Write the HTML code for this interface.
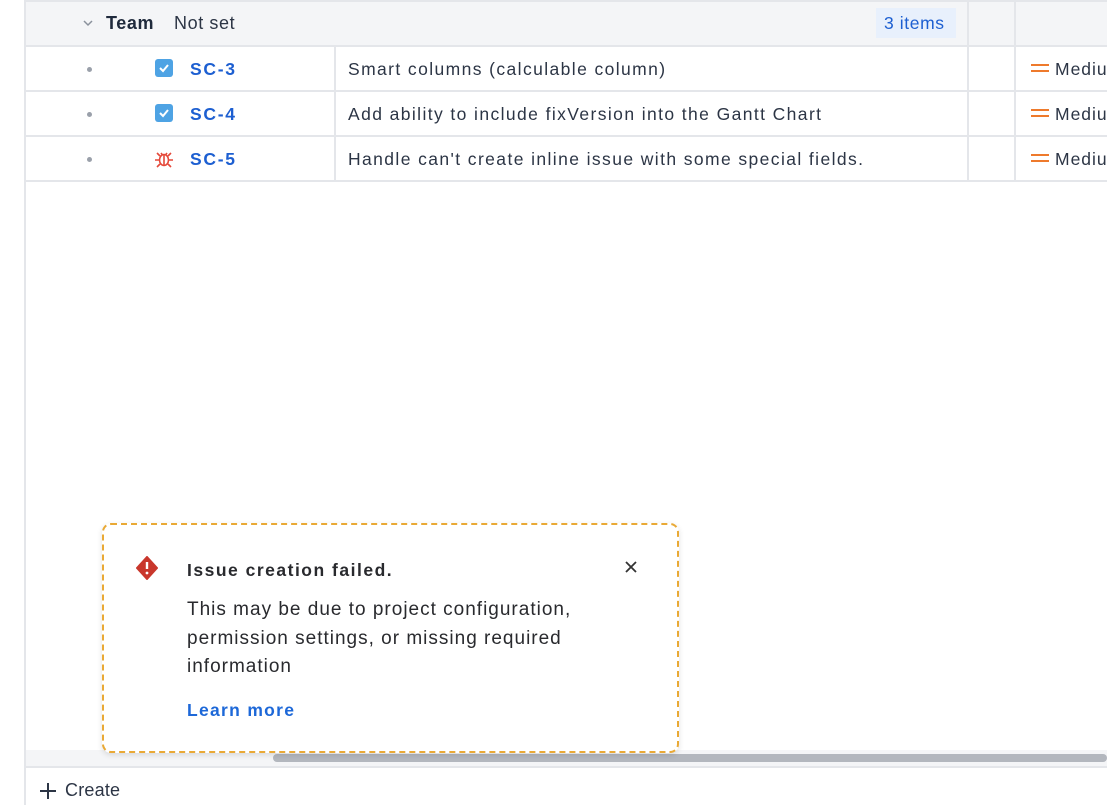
<!DOCTYPE html>
<html><head><style>
body{margin:0;width:1107px;height:805px;overflow:hidden;background:#fff;font-family:"Liberation Sans",sans-serif;color:#172b4d;position:relative}
.abs{position:absolute}
.vl{position:absolute;width:2px;background:#e4e6ea}
.hl{position:absolute;height:2px;background:#e4e6ea;left:25px;right:0}
.t{position:absolute;font-size:17.5px;letter-spacing:1.4px;color:#2c3545;white-space:nowrap}
.key{position:absolute;font-size:17.5px;letter-spacing:1.7px;color:#1d5fd1;font-weight:bold;left:190px}
.dot{position:absolute;left:87px;width:5px;height:5px;border-radius:50%;background:#9aa0aa}
.cb{position:absolute;left:155px;width:18px;height:18px;border-radius:3px;background:#4ea3e4}
.med{position:absolute;left:1031px;font-size:17.5px;letter-spacing:1px;color:#2c3545;white-space:nowrap}
.med:before{content:"";display:inline-block;width:18px;height:8px;border-top:2.5px solid #ee7a2c;border-bottom:2.5px solid #ee7a2c;box-sizing:border-box;margin-right:6px;vertical-align:3px}
</style></head><body>
<div class="abs" style="left:25px;top:0;right:0;height:46px;background:#f4f5f7"></div>
<div class="vl" style="left:24px;top:0;height:805px;width:2px"></div>
<div class="hl" style="top:0"></div>
<div class="hl" style="top:45px"></div>
<div class="hl" style="top:90px"></div>
<div class="hl" style="top:135px"></div>
<div class="hl" style="top:180px"></div>
<div class="vl" style="left:967px;top:0;height:181px"></div>
<div class="vl" style="left:1014px;top:0;height:181px"></div>
<div class="vl" style="left:334px;top:46px;height:135px"></div>
<svg class="abs" style="left:83px;top:19px" width="10" height="8"><path d="M1 2l4 4 4-4" stroke="#8a919c" stroke-width="1.5" fill="none"/></svg>
<div class="abs" style="left:106px;top:13px;font-size:18px;letter-spacing:0.6px;font-weight:bold;color:#1f2a3c">Team</div>
<div class="abs" style="left:174px;top:13px;font-size:18px;letter-spacing:0.6px;color:#2c3545">Not set</div>
<div class="abs" style="left:876px;top:8px;width:80px;height:30px;background:#e8f0fc"></div>
<div class="abs" style="left:884px;top:13px;font-size:17.5px;letter-spacing:0.6px;color:#1d5fd1">3 items</div>

<div class="dot" style="top:67px"></div>
<div class="cb" style="top:59px"><svg width="18" height="18"><path d="M5 9l3 3 5-6" stroke="#fff" stroke-width="2" fill="none"/></svg></div>
<div class="key" style="top:59px">SC-3</div>
<div class="t" style="left:348px;top:59px">Smart columns (calculable column)</div>
<div class="med" style="top:59px">Mediu</div>

<div class="dot" style="top:112px"></div>
<div class="cb" style="top:104px"><svg width="18" height="18"><path d="M5 9l3 3 5-6" stroke="#fff" stroke-width="2" fill="none"/></svg></div>
<div class="key" style="top:104px">SC-4</div>
<div class="t" style="left:348px;top:104px">Add ability to include fixVersion into the Gantt Chart</div>
<div class="med" style="top:104px">Mediu</div>

<div class="dot" style="top:157px"></div>
<svg class="abs" style="left:154px;top:149px" width="20" height="20" fill="none" stroke="#e5493a" stroke-width="1.6"><ellipse cx="10" cy="11" rx="4.5" ry="5.5"/><path d="M10 6v10M5.5 11H1M14.5 11H19M6 7L3 4M14 7l3-3M6 15l-3 3M14 15l3 3M7 4l1.5 2M13 4l-1.5 2"/></svg>
<div class="key" style="top:149px">SC-5</div>
<div class="t" style="left:348px;top:149px">Handle can't create inline issue with some special fields.</div>
<div class="med" style="top:149px">Mediu</div>

<div class="abs" style="left:26px;top:750px;right:0;height:16px;background:#f4f5f7"></div>
<div class="abs" style="left:273px;top:754px;right:0;height:8px;background:#b3b7be;border-radius:4px"></div>
<div class="hl" style="top:766px"></div>
<svg class="abs" style="left:38px;top:781px" width="20" height="20"><path d="M10 2v16M2 10h16" stroke="#2c3545" stroke-width="2"/></svg>
<div class="abs" style="left:65px;top:780px;font-size:18px;letter-spacing:0.2px;color:#2c3545">Create</div>

<div class="abs" style="left:102px;top:523px;width:573px;height:226px;border:2px dashed #e9a935;border-radius:9px;background:#fff;box-shadow:0 2px 6px rgba(0,0,0,.12)"></div>
<svg class="abs" style="left:136px;top:556px" width="22" height="24"><path d="M11 1L21 12 11 23 1 12z" fill="#c9372c" stroke="#c9372c" stroke-linejoin="round" stroke-width="2"/><path d="M11 6v7" stroke="#fff" stroke-width="2.4"/><circle cx="11" cy="17" r="1.4" fill="#fff"/></svg>
<div class="abs" style="left:187px;top:560px;font-size:17.5px;letter-spacing:1.5px;font-weight:bold;color:#292a2e">Issue creation failed.</div>
<svg class="abs" style="left:624px;top:560px" width="14" height="14"><path d="M2 2l10 10M12 2L2 12" stroke="#333" stroke-width="1.8"/></svg>
<div class="abs" style="left:187px;top:596px;font-size:19px;letter-spacing:1px;line-height:28.5px;color:#292a2e;width:440px;white-space:nowrap">This may be due to project configuration,<br>permission settings, or missing required<br>information</div>
<div class="abs" style="left:187px;top:700px;font-size:17.5px;letter-spacing:1.3px;font-weight:bold;color:#1d68d8">Learn more</div>
</body></html>
